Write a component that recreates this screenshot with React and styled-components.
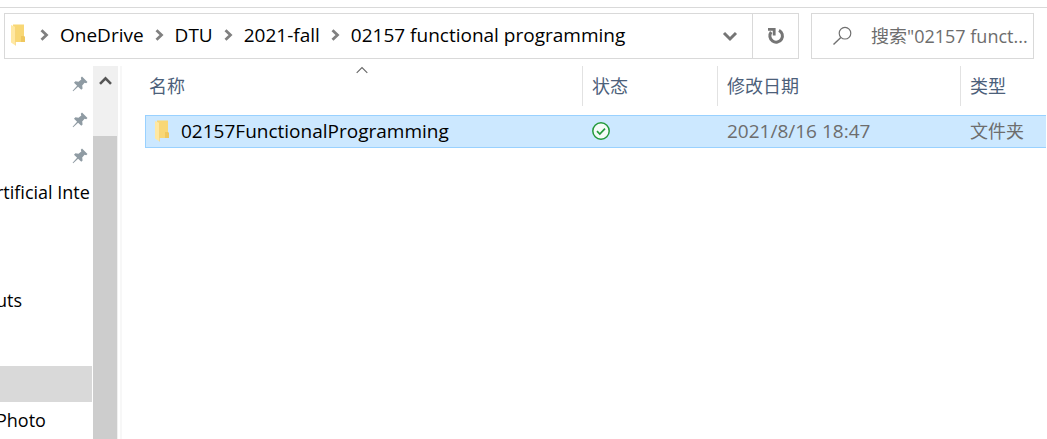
import React from "react";
import styled, { createGlobalStyle } from "styled-components";

const Global = createGlobalStyle`
  *, *::before, *::after { box-sizing: border-box; }
  body {
    margin: 0;
    background: #fff;
    color: #000;
    font: 18px/24px "Open Sans", "Noto Sans CJK SC", sans-serif;
    overflow: hidden;
  }
  button, input { font: inherit; margin: 0; padding: 0; border: 0; background: none; }
  svg { display: block; flex: none; }
`;

const Window = styled.div`
  display: flex;
  flex-direction: column;
  min-height: 100vh;
  padding-top: 7px;
`;

const Toolbar = styled.header`
  display: flex;
  gap: 12px;
  padding: 5px 13px 7px 4px;
  border-top: 1px solid #d9d9d9;
`;

const AddressBar = styled.div`
  display: flex;
  flex: 1;
  height: 46px;
  border: 1px solid #d9d9d9;
`;

const Crumbs = styled.nav`
  display: flex;
  flex: 1;
  align-items: center;
  padding: 0 0 2px 5px;
  font-size: 19px;
  > svg { margin-right: 3px; }
`;

const Crumb = styled.a`
  display: flex;
  align-items: center;
  color: #000;
  text-decoration: none;
  white-space: nowrap;
`;

const Separator = styled.span`
  display: flex;
  justify-content: center;
  width: 31px;
`;

const BarButton = styled.button`
  display: flex;
  align-items: center;
  justify-content: center;
  width: 46px;
  border-left: 1px solid ${(p) => (p.$divided ? "#d9d9d9" : "transparent")};
`;

const SearchBox = styled.label`
  display: flex;
  align-items: center;
  gap: 18px;
  width: 223px;
  height: 46px;
  padding-left: 20px;
  border: 1px solid #d9d9d9;
`;

const SearchInput = styled.input`
  flex: 1;
  min-width: 0;
  outline: 0;
  &::placeholder { color: #6d6d6d; opacity: 1; }
`;

const Body = styled.div`
  display: flex;
  flex: 1;
`;

const Sidebar = styled.nav`
  width: 92px;
  margin-right: 1px;
  overflow: hidden;
`;

const SideItem = styled.a`
  display: flex;
  align-items: center;
  justify-content: ${(p) => (p.$pinned ? "flex-end" : "flex-start")};
  height: 36px;
  margin-top: ${(p) => (p.$selected ? "12px" : "0")};
  padding-right: ${(p) => (p.$pinned ? "4px" : "0")};
  background: ${(p) => (p.$selected ? "#d9d9d9" : "transparent")};
  color: #000;
  text-decoration: none;
  white-space: nowrap;
`;

const SideLabel = styled.span`
  margin-left: -4px;
`;

const ScrollTrack = styled.div`
  display: flex;
  flex-direction: column;
  width: 25px;
  background: #f0f0f0;
`;

const ScrollUp = styled.button`
  display: flex;
  justify-content: center;
  height: 70px;
  padding-top: 10px;
`;

const ScrollThumb = styled.div`
  flex: 1;
  margin-right: 1px;
  background: #cdcdcd;
`;

const Pane = styled.main`
  flex: 1;
  min-width: 0;
  margin-left: 2px;
  padding: 0 1px 0 23px;
  border-left: 2px solid #f7f7f7;
`;

const FileTable = styled.table`
  width: 100%;
  table-layout: fixed;
  border-spacing: 0;
`;

const HeadCell = styled.th`
  position: relative;
  width: ${(p) => p.$width || "auto"};
  height: 40px;
  padding: 0 0 0 ${(p) => (p.$first ? "4px" : "9px")};
  border-right: ${(p) => (p.$last ? "0" : "1px solid #e2e2e2")};
  color: #4c607a;
  font-weight: 400;
  text-align: left;
`;

const SortMark = styled.span`
  position: absolute;
  top: 0;
  left: 0;
  right: 4px;
  display: flex;
  justify-content: center;
`;

const Files = styled.tbody`
  &::before { content: ""; display: block; height: 9px; }
`;

const Cell = styled.td`
  height: 33px;
  padding: 0 0 2px 9px;
  border: solid #99d1ff;
  border-width: 1px 0;
  background: #cce8ff;
  color: #6d6d6d;
  font-size: ${(p) => (p.$large ? "19px" : "18px")};
  white-space: nowrap;
  &:first-child {
    padding-left: 8px;
    border-left-width: 1px;
  }
`;

const FileName = styled.span`
  display: flex;
  align-items: center;
  gap: 11px;
  color: #000;
`;

const FolderIcon = () => (
  <svg width="16" height="22" viewBox="0 0 16 22" aria-hidden="true">
    <path d="M3 0.5H14V12.5L15 13V18H4Z" fill="#f8d775" />
    <path d="M11 12H14L15 13V18H11Z" fill="#efc75e" />
    <path d="M1 1L5.5 3V21.5L1 18.5Z" fill="#ffe8a2" />
    <path d="M5.5 3V21.5" stroke="#f3cf70" strokeWidth="0.6" />
  </svg>
);

const Chevron = () => (
  <svg width="9" height="12" viewBox="0 0 9 12" aria-hidden="true">
    <path d="M1.5 1.2L6.5 6L1.5 10.8" fill="none" stroke="#808080" strokeWidth="2.8" />
  </svg>
);

const DownIcon = () => (
  <svg width="16" height="12" viewBox="0 0 16 12" aria-hidden="true">
    <path d="M2 3L8 9L14 3" fill="none" stroke="#757575" strokeWidth="3" />
  </svg>
);

const RefreshIcon = () => (
  <svg width="18" height="18" viewBox="0 0 18 18" aria-hidden="true">
    <path d="M12 3.3A6.3 6.3 0 1 1 4.2 5" fill="none" stroke="#757575" strokeWidth="3" />
    <path d="M1 1H8.6V8.6H5.8V3.8H1Z" fill="#757575" />
  </svg>
);

const SearchIcon = () => (
  <svg width="21" height="20" viewBox="0 0 21 20" aria-hidden="true">
    <circle cx="13" cy="7.2" r="5.8" fill="none" stroke="#707070" strokeWidth="1.2" />
    <path d="M8.8 11.4L1.5 18.6" stroke="#707070" strokeWidth="1.4" />
  </svg>
);

const PinIcon = () => (
  <svg width="16" height="16" viewBox="0 0 16 16" aria-hidden="true">
    <path d="M10 0.5L15.5 6L14.2 7.2L12.6 6.7L10.2 9.4L10.6 12.4L9.3 13.8L6.1 10.7L1.2 15.3L0.6 14.8L5.1 9.8L2 6.7L3.4 5.3L6.5 5.8L9.3 3.5L8.8 1.7Z" fill="#8f9ba3" />
  </svg>
);

const UpIcon = () => (
  <svg width="13" height="10" viewBox="0 0 13 10" aria-hidden="true">
    <path d="M1 7.8L6.5 2.3L12 7.8" fill="none" stroke="#555" strokeWidth="2.6" />
  </svg>
);

const SortIcon = () => (
  <svg width="12" height="8" viewBox="0 0 12 8" aria-hidden="true">
    <path d="M0.7 6.8L6 1.5L11.3 6.8" fill="none" stroke="#666" strokeWidth="1.1" />
  </svg>
);

const SyncedIcon = () => (
  <svg width="18" height="18" viewBox="0 0 18 18" role="img" aria-label="Synced">
    <circle cx="9" cy="9" r="8.2" fill="#f5fbf8" stroke="#259a3c" strokeWidth="1.5" />
    <path d="M5 9.2L7.8 12L13 6.7" fill="none" stroke="#259a3c" strokeWidth="1.7" />
  </svg>
);

const crumbs = ["OneDrive", "DTU", "2021-fall", "02157 functional programming"];

const places = [
  { pinned: true },
  { pinned: true },
  { pinned: true },
  { label: "rtificial Inte" },
  {},
  {},
  { label: "uts" },
  {},
  { selected: true },
  { label: "Photo" },
];

export default function App() {
  return (
    <Window>
      <Global />
      <Toolbar>
        <AddressBar>
          <Crumbs>
            <FolderIcon />
            {crumbs.map((name) => (
              <Crumb key={name} href="#">
                <Separator><Chevron /></Separator>
                {name}
              </Crumb>
            ))}
          </Crumbs>
          <BarButton type="button" aria-label="Recent locations"><DownIcon /></BarButton>
          <BarButton type="button" aria-label="Refresh" $divided><RefreshIcon /></BarButton>
        </AddressBar>
        <SearchBox>
          <SearchIcon />
          <SearchInput type="text" aria-label="搜索" placeholder={'搜索"02157 funct...'} />
        </SearchBox>
      </Toolbar>
      <Body>
        <Sidebar>
          {places.map((place, i) => (
            <SideItem key={i} href="#" $pinned={place.pinned} $selected={place.selected}>
              {place.pinned && <PinIcon />}
              {place.label && <SideLabel>{place.label}</SideLabel>}
            </SideItem>
          ))}
        </Sidebar>
        <ScrollTrack>
          <ScrollUp type="button" aria-label="Scroll up"><UpIcon /></ScrollUp>
          <ScrollThumb />
        </ScrollTrack>
        <Pane>
          <FileTable>
            <thead>
              <tr>
                <HeadCell $first>
                  名称
                  <SortMark><SortIcon /></SortMark>
                </HeadCell>
                <HeadCell $width="135px">状态</HeadCell>
                <HeadCell $width="243px">修改日期</HeadCell>
                <HeadCell $width="85px" $last>类型</HeadCell>
              </tr>
            </thead>
            <Files>
              <tr>
                <Cell $large>
                  <FileName><FolderIcon />02157FunctionalProgramming</FileName>
                </Cell>
                <Cell><SyncedIcon /></Cell>
                <Cell $large>2021/8/16 18:47</Cell>
                <Cell>文件夹</Cell>
              </tr>
            </Files>
          </FileTable>
        </Pane>
      </Body>
    </Window>
  );
}
